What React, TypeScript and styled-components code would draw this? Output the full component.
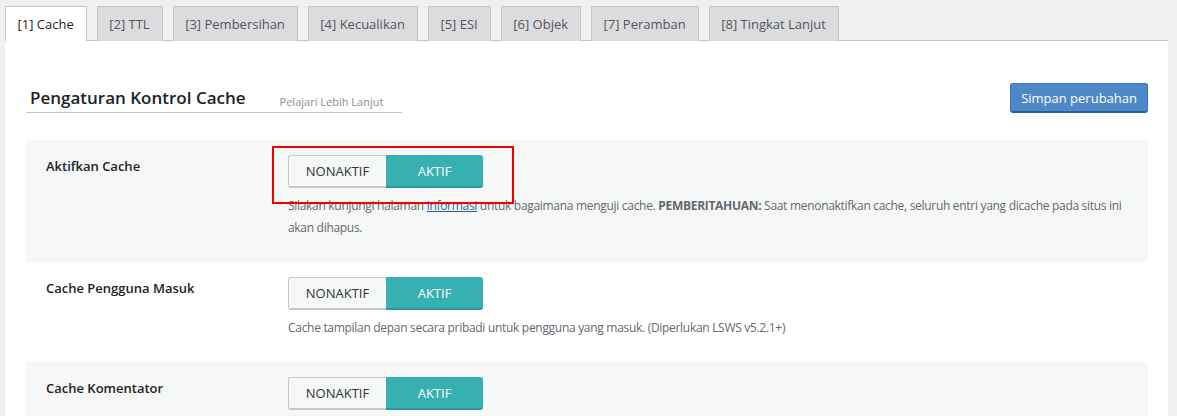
import React from 'react';
import styled, { createGlobalStyle } from 'styled-components';

const GlobalStyle = createGlobalStyle`
  html, body {
    margin: 0;
    padding: 0;
    background: #f0f0f1;
    font-family: "Open Sans", "Noto Sans", sans-serif;
    color: #1d2327;
    overflow: hidden;
  }
`;

const Page = styled.div`
  padding: 6px 9px 0 5px;
`;

const TabBar = styled.nav`
  display: flex;
  gap: 10px;
  align-items: flex-end;
`;

const Tab = styled.a<{ $active?: boolean }>`
  display: block;
  height: 35px;
  box-sizing: border-box;
  padding: 0 12px 0 11.5px;
  line-height: 34px;
  font-size: 13px;
  text-decoration: none;
  border: 1px solid #c3c4c7;
  border-bottom: none;
  background: ${p => (p.$active ? '#ffffff' : '#dcdcde')};
  color: ${p => (p.$active ? '#1d2327' : '#50575e')};
  font-weight: ${p => (p.$active ? 500 : 400)};
  position: relative;
  margin-bottom: -1px;
  z-index: ${p => (p.$active ? 2 : 1)};
`;

const Panel = styled.section`
  background: #ffffff;
  border-top: 1px solid #c3c4c7;
  padding: 42px 20px 0 21px;
  min-height: 380px;
`;

const Header = styled.div`
  display: flex;
  justify-content: space-between;
  align-items: flex-start;
  margin-bottom: 27px;
`;

const Title = styled.h2`
  margin: 0;
  width: 376px;
  display: flex;
  align-items: baseline;
  gap: 34px;
  padding: 3px 0 3px 4px;
  box-sizing: border-box;
  border-bottom: 1px solid #c3c4c7;
  font-size: 17px;
  font-weight: 600;
  color: #1d2327;
`;

const LearnMore = styled.a`
  font-size: 11px;
  font-weight: 400;
  color: #8c8f94;
  text-decoration: none;
  position: relative;
  top: 2px;
`;

const SaveButton = styled.button`
  height: 30px;
  padding: 0 10px;
  border: 1px solid #3a75b8;
  border-bottom: 2px solid #2262a9;
  border-radius: 3px;
  background: #4e88c7;
  color: #ffffff;
  font-family: inherit;
  font-size: 13px;
  cursor: pointer;
`;

const Row = styled.div<{ $shaded?: boolean }>`
  display: grid;
  grid-template-columns: 242px 1fr;
  background: ${p => (p.$shaded ? '#f6f7f7' : '#ffffff')};
  padding: 15px 20px 23px 20px;
`;

const Label = styled.div`
  font-size: 13px;
  font-weight: 600;
  color: #1d2327;
  line-height: 22px;
`;

const Field = styled.div`
  position: relative;
`;

const Toggle = styled.div`
  display: flex;
  width: 195px;
  height: 33px;
`;

const ToggleHalf = styled.span<{ $on?: boolean }>`
  flex: 1;
  display: flex;
  align-items: center;
  justify-content: center;
  box-sizing: border-box;
  font-size: 13px;
  text-transform: uppercase;
  ${p =>
    p.$on
      ? `
    background: #36b0b0;
    color: #ffffff;
    border-bottom: 2px solid #2a9898;
    border-radius: 0 3px 3px 0;
  `
      : `
    background: #f6f7f7;
    color: #2c3338;
    border: 1px solid #c9cacc;
    border-bottom: 2px solid #c5c6c8;
    border-right: none;
    border-radius: 3px 0 0 3px;
  `}
`;

const Description = styled.p`
  margin: 7px 0 0 0;
  max-width: 850px;
  font-size: 12px;
  letter-spacing: -0.3px;
  line-height: 22px;
  color: #646970;
`;

const DocLink = styled.a`
  color: #2a5f9e;
  text-decoration: underline;
`;

const Highlight = styled.div`
  position: absolute;
  left: -16px;
  top: -9px;
  width: 242px;
  height: 58px;
  box-sizing: border-box;
  border: 2px solid #f20000;
  pointer-events: none;
`;

const tabs = [
  '[1] Cache',
  '[2] TTL',
  '[3] Pembersihan',
  '[4] Kecualikan',
  '[5] ESI',
  '[6] Objek',
  '[7] Peramban',
  '[8] Tingkat Lanjut',
];

const Switch: React.FC = () => (
  <Toggle>
    <ToggleHalf>Nonaktif</ToggleHalf>
    <ToggleHalf $on>Aktif</ToggleHalf>
  </Toggle>
);

const App: React.FC = () => (
  <>
    <GlobalStyle />
    <Page>
      <TabBar>
        {tabs.map((t, i) => (
          <Tab key={t} $active={i === 0}>
            {t}
          </Tab>
        ))}
      </TabBar>
      <Panel>
        <Header>
          <Title>
            Pengaturan Kontrol Cache
            <LearnMore>Pelajari Lebih Lanjut</LearnMore>
          </Title>
          <SaveButton>Simpan perubahan</SaveButton>
        </Header>

        <Row $shaded>
          <Label>Aktifkan Cache</Label>
          <Field>
            <Switch />
            <Highlight />
            <Description>
              Silakan kunjungi halaman <DocLink>informasi</DocLink> untuk bagaimana
              menguji cache. <strong>PEMBERITAHUAN:</strong> Saat menonaktifkan cache,
              seluruh entri yang dicache pada situs ini akan dihapus.
            </Description>
          </Field>
        </Row>

        <Row>
          <Label>Cache Pengguna Masuk</Label>
          <Field>
            <Switch />
            <Description>
              Cache tampilan depan secara pribadi untuk pengguna yang masuk.
              (Diperlukan LSWS v5.2.1+)
            </Description>
          </Field>
        </Row>

        <Row $shaded>
          <Label>Cache Komentator</Label>
          <Field>
            <Switch />
          </Field>
        </Row>
      </Panel>
    </Page>
  </>
);

export default App;
